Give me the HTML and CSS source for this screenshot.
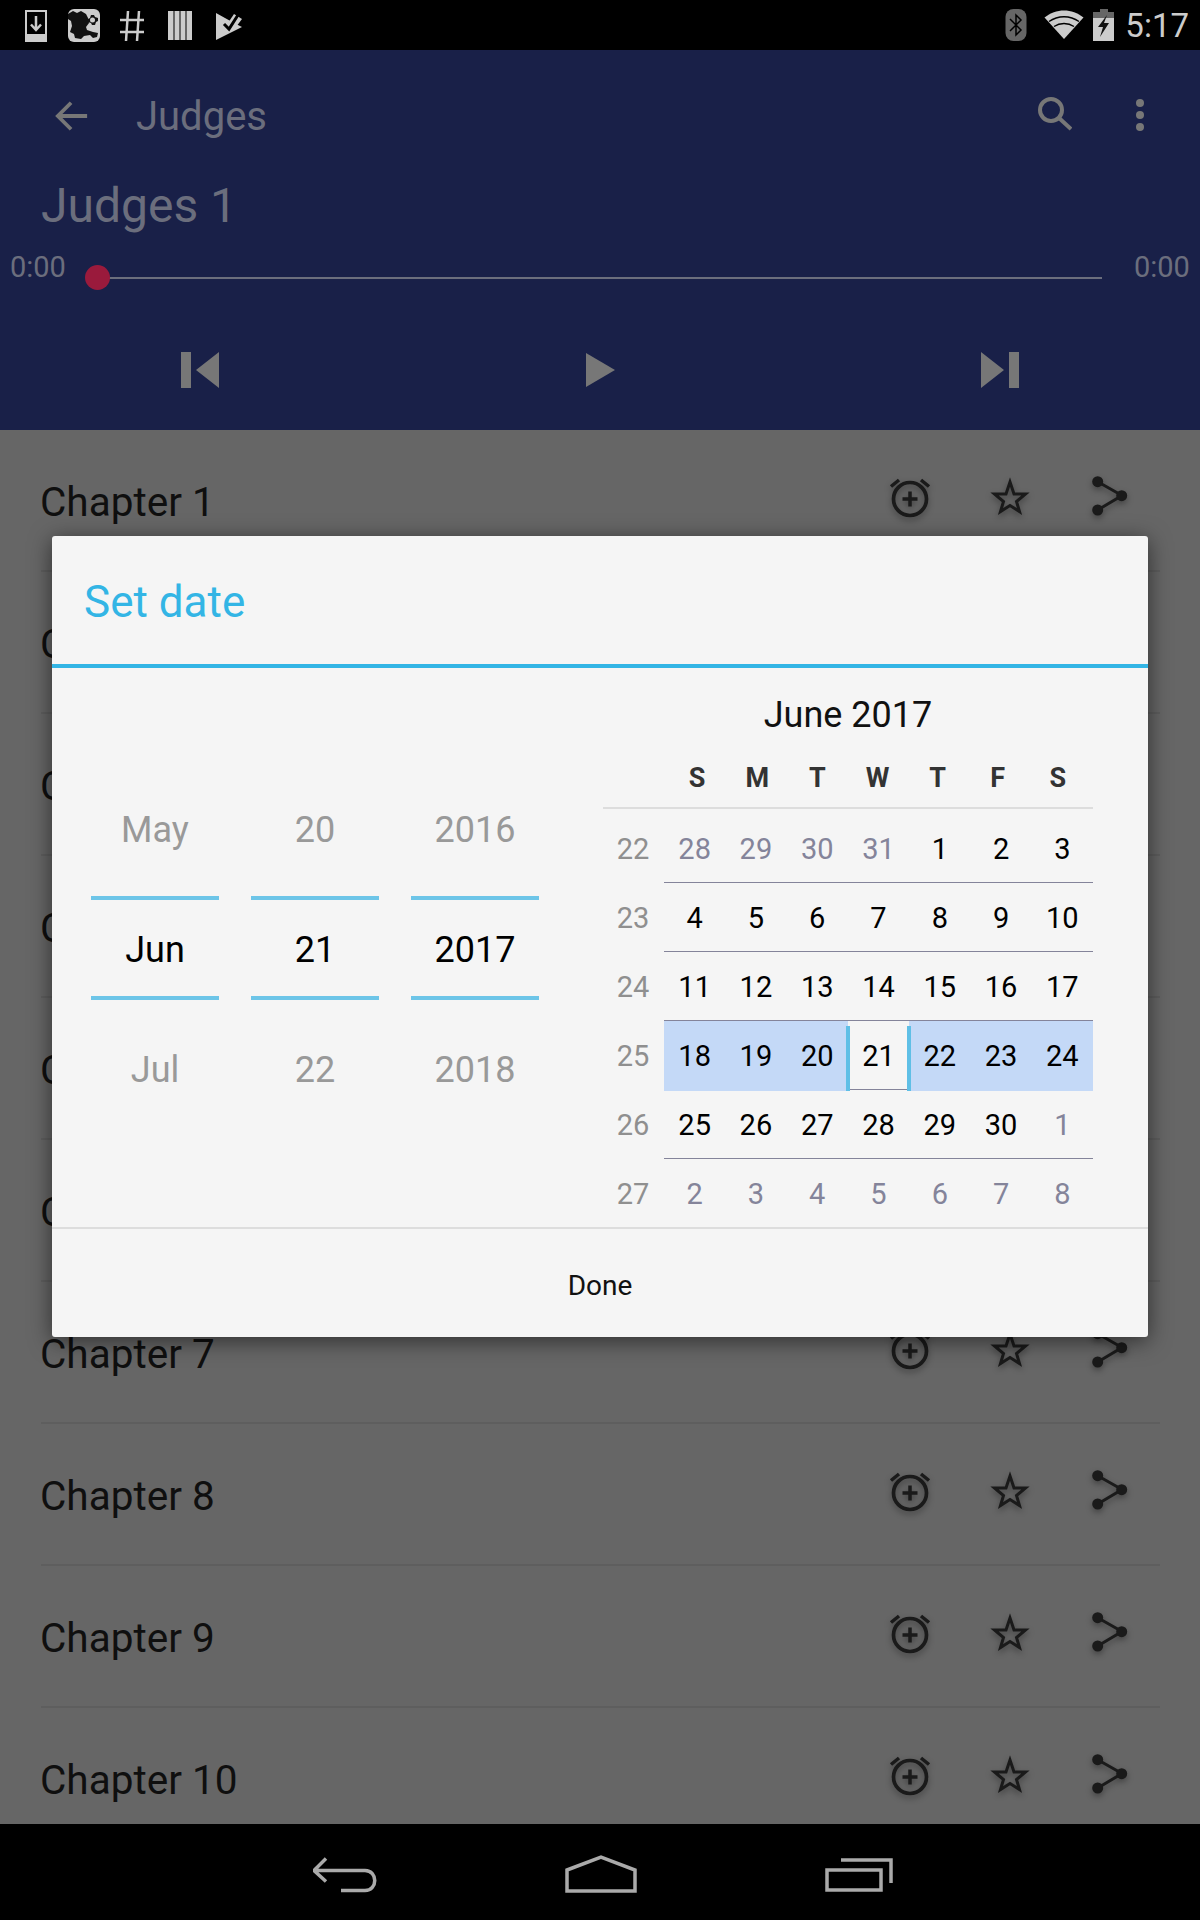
FILE: index.html
```html
<!DOCTYPE html>
<html lang="en">
<head>
    <meta charset="UTF-8">
    <meta name="viewport" content="width=device-width, initial-scale=1.0">
    <title>Judges</title>
    <link rel="stylesheet" href="styles.css">
</head>
<body>
    <svg class="defs" width="0" height="0">
        <symbol id="alarm" viewBox="0 0 48 48">
            <circle cx="24" cy="26" r="16.5" fill="none" stroke="currentColor" stroke-width="3.7"/>
            <path d="M5 13.500 13 7M43 13.500 35 7" fill="none" stroke="currentColor" stroke-width="3.500"/>
            <path d="M24 18.500v15M16.500 26h15" fill="none" stroke="currentColor" stroke-width="3.500"/>
        </symbol>
        <symbol id="star" viewBox="0 0 48 48">
            <path d="M24 9 28 21 39.500 21 30.500 28.500 33.500 38.500 24 32.500 14.500 38.500 17.500 28.500 8.500 21 20 21Z" fill="none" stroke="currentColor" stroke-width="3"/>
        </symbol>
        <symbol id="share" viewBox="0 0 48 48">
            <path d="M11.700 8.700 36 22.500 11.700 37" fill="none" stroke="currentColor" stroke-width="3"/>
            <circle cx="11.700" cy="8.700" r="5.500" fill="currentColor"/>
            <circle cx="35.700" cy="22.700" r="5.500" fill="currentColor"/>
            <circle cx="11.700" cy="37" r="5.500" fill="currentColor"/>
        </symbol>
    </svg>

    <div class="screen">
        <header class="statusbar">
            <div class="status-left">
                <svg class="sicon" viewBox="0 0 48 48">
                    <path d="M14 10h20v30H14Z" fill="none" stroke="#ccc" stroke-width="2"/>
                    <path d="M14 33h20v8H14Z" fill="#ccc"/>
                    <path d="M24 15v13M19 23.500l5 5.500 5-5.500" fill="none" stroke="#ccc" stroke-width="2.500"/>
                </svg>
                <svg class="sicon" viewBox="0 0 48 48">
                    <rect x="8" y="8" width="32" height="33" rx="6" fill="#ccc"/>
                    <path d="M8 13 13 10 17 12 21 10 26 13 28 17 29 22 26 26 27 29 33 31 38 32 37 36 33 37 30 34 24 35 21 38 15 37 14 33 10 31 12 25 11 20 8 18Z" fill="#111"/>
                    <path d="M31 14l3 0 1 2 3 1v3l-2 1-1 3h-3l-1-2-3-1v-3l2-1Z" fill="#111"/>
                    <circle cx="32.500" cy="19" r="2.500" fill="#ccc"/>
                </svg>
                <svg class="sicon" viewBox="0 0 48 48">
                    <path d="M20 10 18 40M31 10 29 40M12 19H36M12 31H36" fill="none" stroke="#ccc" stroke-width="2.500"/>
                </svg>
                <svg class="sicon" viewBox="0 0 48 48">
                    <path d="M12 10h5.500v29H12ZM18.500 10h5v29h-5ZM24.500 10h5v29h-5ZM30.500 10h5.500v29h-5.500Z" fill="#ccc"/>
                </svg>
                <svg class="sicon" viewBox="0 0 48 48">
                    <path d="M12 12 21 17 30 22 38 26 12 39Z" fill="#ccc"/>
                    <path d="M30 13 38 18 32 26 24 22Z" fill="#ccc"/>
                    <path d="M20 23l5 5 9-14" fill="none" stroke="#000" stroke-width="3"/>
                </svg>
            </div>
            <div class="status-right">
                <svg class="sicon" viewBox="0 0 48 48">
                    <rect x="13.500" y="8" width="21" height="32" rx="8" fill="#666"/>
                    <path d="M18 18 29 29 24 34V14L29 19 18 30" fill="none" stroke="#000" stroke-width="1.500"/>
                </svg>
                <svg class="sicon" viewBox="0 0 48 48">
                    <path d="M4.500 16.500C16 7 32 7 43.500 16.500L24 38Z" fill="#ccc"/>
                    <path d="M9 20.500C18 14 30 14 39 20.500M14 25.500C20 21.500 28 21.500 34 25.500" fill="none" stroke="#000" stroke-width="1.500"/>
                </svg>
                <svg class="sicon sicon-batt" viewBox="0 0 32 48">
                    <path d="M12 8h8v3h6v6H5v-6h7Z" fill="#666"/>
                    <path d="M5 17h21v23H5Z" fill="#ccc"/>
                    <path d="M19 14 10 26h5l-3 10 9-14h-5Z" fill="#111"/>
                </svg>
                <span class="clock">5:17</span>
            </div>
        </header>

        <section class="player">
            <div class="toolbar">
                <svg class="tool-back" viewBox="0 0 36 36">
                    <path d="M34 18H4M17 4 3 18 17 32" fill="none" stroke="#777" stroke-width="4"/>
                </svg>
                <span class="toolbar-title">Judges</span>
                <svg class="tool-search" viewBox="0 0 36 36">
                    <circle cx="15" cy="15" r="11" fill="none" stroke="#777" stroke-width="4"/>
                    <path d="M23 23 35 34" fill="none" stroke="#777" stroke-width="4"/>
                </svg>
                <svg class="tool-more" viewBox="0 0 12 36">
                    <circle cx="6" cy="6" r="4" fill="#777"/>
                    <circle cx="6" cy="18" r="4" fill="#777"/>
                    <circle cx="6" cy="30" r="4" fill="#777"/>
                </svg>
            </div>
            <div class="track-title">Judges 1</div>
            <div class="seek">
                <span class="seek-time">0:00</span>
                <div class="seek-bar"><span class="seek-thumb"></span></div>
                <span class="seek-time">0:00</span>
            </div>
            <div class="controls">
                <svg class="ctl" viewBox="0 0 40 38"><path d="M1 1h10v36H1ZM16 19 39 1v36Z" fill="#777"/></svg>
                <svg class="ctl" viewBox="0 0 40 38"><path d="M6 2 35 19 6 36Z" fill="#777"/></svg>
                <svg class="ctl" viewBox="0 0 40 38"><path d="M39 1H29v36h10ZM24 19 1 1v36Z" fill="#777"/></svg>
            </div>
        </section>

        <ul class="chapters">
            <li class="chapter"><span class="chapter-name">Chapter 1</span><svg class="act"><use href="#alarm"/></svg><svg class="act"><use href="#star"/></svg><svg class="act"><use href="#share"/></svg></li>
            <li class="chapter"><span class="chapter-name">Chapter 2</span><svg class="act"><use href="#alarm"/></svg><svg class="act"><use href="#star"/></svg><svg class="act"><use href="#share"/></svg></li>
            <li class="chapter"><span class="chapter-name">Chapter 3</span><svg class="act"><use href="#alarm"/></svg><svg class="act"><use href="#star"/></svg><svg class="act"><use href="#share"/></svg></li>
            <li class="chapter"><span class="chapter-name">Chapter 4</span><svg class="act"><use href="#alarm"/></svg><svg class="act"><use href="#star"/></svg><svg class="act"><use href="#share"/></svg></li>
            <li class="chapter"><span class="chapter-name">Chapter 5</span><svg class="act"><use href="#alarm"/></svg><svg class="act"><use href="#star"/></svg><svg class="act"><use href="#share"/></svg></li>
            <li class="chapter"><span class="chapter-name">Chapter 6</span><svg class="act"><use href="#alarm"/></svg><svg class="act"><use href="#star"/></svg><svg class="act"><use href="#share"/></svg></li>
            <li class="chapter"><span class="chapter-name">Chapter 7</span><svg class="act"><use href="#alarm"/></svg><svg class="act"><use href="#star"/></svg><svg class="act"><use href="#share"/></svg></li>
            <li class="chapter"><span class="chapter-name">Chapter 8</span><svg class="act"><use href="#alarm"/></svg><svg class="act"><use href="#star"/></svg><svg class="act"><use href="#share"/></svg></li>
            <li class="chapter"><span class="chapter-name">Chapter 9</span><svg class="act"><use href="#alarm"/></svg><svg class="act"><use href="#star"/></svg><svg class="act"><use href="#share"/></svg></li>
            <li class="chapter"><span class="chapter-name">Chapter 10</span><svg class="act"><use href="#alarm"/></svg><svg class="act"><use href="#star"/></svg><svg class="act"><use href="#share"/></svg></li>
        </ul>

        <footer class="navbar">
            <svg class="nav-back" viewBox="0 0 66 36">
                <path d="M13 1.500 1 13.500 13 24.500M1 13.500H52C65 13.500 65 33.500 52 33.500H28" fill="none" stroke="#aaa" stroke-width="3.500"/>
            </svg>
            <svg class="nav-home" viewBox="0 0 72 38">
                <path d="M2 15 36 2 70 15V36H2Z" fill="none" stroke="#aaa" stroke-width="3.500"/>
            </svg>
            <svg class="nav-recent" viewBox="0 0 68 34">
                <path d="M2 12H56V32H2Z" fill="none" stroke="#aaa" stroke-width="3.500"/>
                <path d="M16 2H66V25" fill="none" stroke="#aaa" stroke-width="3.500"/>
            </svg>
        </footer>

        <div class="dialog">
            <div class="dialog-title">Set date</div>
            <div class="dialog-body">
                <div class="picker">
                    <div class="picker-col">
                        <div class="picker-item">May</div>
                        <div class="picker-now">Jun</div>
                        <div class="picker-item">Jul</div>
                    </div>
                    <div class="picker-col">
                        <div class="picker-item">20</div>
                        <div class="picker-now">21</div>
                        <div class="picker-item">22</div>
                    </div>
                    <div class="picker-col">
                        <div class="picker-item">2016</div>
                        <div class="picker-now">2017</div>
                        <div class="picker-item">2018</div>
                    </div>
                </div>
                <div class="calendar">
                    <div class="cal-month">June 2017</div>
                    <div class="cal-head">
                        <span>S</span><span>M</span><span>T</span><span>W</span><span>T</span><span>F</span><span>S</span>
                    </div>
                    <div class="cal-week">
                        <span class="week-no">22</span>
                        <div class="days">
                            <span class="off">28</span><span class="off">29</span><span class="off">30</span><span class="off">31</span><span>1</span><span>2</span><span>3</span>
                        </div>
                    </div>
                    <div class="cal-week">
                        <span class="week-no">23</span>
                        <div class="days">
                            <span>4</span><span>5</span><span>6</span><span>7</span><span>8</span><span>9</span><span>10</span>
                        </div>
                    </div>
                    <div class="cal-week">
                        <span class="week-no">24</span>
                        <div class="days">
                            <span>11</span><span>12</span><span>13</span><span>14</span><span>15</span><span>16</span><span>17</span>
                        </div>
                    </div>
                    <div class="cal-week">
                        <span class="week-no">25</span>
                        <div class="days days-picked">
                            <span>18</span><span>19</span><span>20</span><span class="today">21</span><span>22</span><span>23</span><span>24</span>
                        </div>
                    </div>
                    <div class="cal-week">
                        <span class="week-no">26</span>
                        <div class="days">
                            <span>25</span><span>26</span><span>27</span><span>28</span><span>29</span><span>30</span><span class="off">1</span>
                        </div>
                    </div>
                    <div class="cal-week">
                        <span class="week-no">27</span>
                        <div class="days">
                            <span class="off">2</span><span class="off">3</span><span class="off">4</span><span class="off">5</span><span class="off">6</span><span class="off">7</span><span class="off">8</span>
                        </div>
                    </div>
                </div>
            </div>
            <div class="dialog-done">Done</div>
        </div>
    </div>
</body>
</html>
```

FILE: styles.css
```css
* {
    box-sizing: border-box;
}
body {
    margin: 0;
    font-family: Roboto, "Liberation Sans", sans-serif;
    background-color: #000;
}
.defs {
    position: absolute;
}
.screen {
    position: relative;
    width: 1200px;
    height: 1920px;
    overflow: hidden;
    display: flex;
    flex-direction: column;
}

/* status bar */
.statusbar {
    height: 50px;
    flex: none;
    background-color: #000;
    display: flex;
    justify-content: space-between;
    align-items: center;
    padding: 0 11px 0 12px;
}
.status-left,
.status-right {
    display: flex;
    align-items: center;
}
.sicon {
    width: 48px;
    height: 48px;
    display: block;
}
.sicon-batt {
    width: 32px;
}
.clock {
    color: #ccc;
    font-size: 33px;
    margin-left: 5px;
}

/* player */
.player {
    height: 380px;
    flex: none;
    background-color: #192048;
    color: #6b6e7d;
}
.toolbar {
    height: 132px;
    position: relative;
    display: flex;
    align-items: center;
    padding-left: 55px;
}
.tool-back {
    width: 34px;
    height: 34px;
    margin-right: 47px;
}
.toolbar-title {
    font-size: 40px;
    flex: 1;
}
.tool-search {
    width: 36px;
    height: 36px;
    margin: -6px 62px 0 0;
}
.tool-more {
    width: 12px;
    height: 36px;
    margin: -2px 54px 0 0;
}
.track-title {
    font-size: 48px;
    line-height: 56px;
    margin-top: -4px;
    padding-left: 41px;
}
.seek {
    display: flex;
    align-items: center;
    height: 44px;
    margin-top: 22px;
    padding: 0 10px;
}
.seek-time {
    font-size: 29px;
    width: 56px;
    margin-top: -22px;
    flex: none;
}
.seek-bar {
    position: relative;
    flex: 1;
    height: 2px;
    margin: 0 32px 0 29px;
    background-color: #6b6e7d;
}
.seek-thumb {
    position: absolute;
    left: -10px;
    top: -12px;
    width: 25px;
    height: 25px;
    border-radius: 50%;
    background-color: #9a1a3c;
}
.controls {
    display: flex;
    justify-content: space-between;
    padding: 51px 180px 0 180px;
}
.ctl {
    width: 40px;
    height: 38px;
}

/* chapter list */
.chapters {
    flex: 1;
    overflow: hidden;
    margin: 0;
    padding: 0 40px 0 41px;
    list-style: none;
    background-color: #666;
}
.chapter {
    height: 142px;
    display: flex;
    align-items: center;
    border-bottom: 2px solid #5e5e5e;
    color: #1a1a1a;
}
.chapter-name {
    flex: 1;
    font-size: 40.5px;
    margin-left: -1px;
    color: #0f0f0f;
    position: relative;
    top: 2px;
}
.act {
    width: 48px;
    height: 48px;
    margin: 0 26px;
    position: relative;
    top: -3px;
    filter: drop-shadow(0 3px 3px rgba(0, 0, 0, 0.35));
}

/* nav bar */
.navbar {
    height: 96px;
    flex: none;
    background-color: #000;
    position: relative;
    display: flex;
    justify-content: center;
    align-items: flex-start;
}
.nav-back {
    width: 66px;
    height: 36px;
    margin: 33px 0 0 5px;
}
.nav-home {
    width: 72px;
    height: 38px;
    margin: 31px 188px 0 186px;
}
.nav-recent {
    width: 68px;
    height: 34px;
    margin: 34px 0 0 0;
}

/* date dialog */
.dialog {
    position: absolute;
    left: 52px;
    top: 536px;
    width: 1096px;
    height: 801px;
    border-radius: 3px;
    background-color: #f5f5f5;
    box-shadow: 0 4px 22px rgba(0, 0, 0, 0.55);
    display: flex;
    flex-direction: column;
}
.dialog-title {
    height: 132px;
    flex: none;
    padding: 4px 32px 0;
    display: flex;
    align-items: center;
    font-size: 44px;
    color: #33b5e5;
    border-bottom: 4px solid #33b5e5;
}
.dialog-body {
    height: 561px;
    flex: none;
    overflow: hidden;
    display: flex;
    border-bottom: 2px solid #ddd;
}
.picker {
    width: 487px;
    padding: 112px 0 0 39px;
    margin-right: 64px;
    display: flex;
    gap: 32px;
    flex: none;
}
.picker-col {
    width: 128px;
    text-align: center;
    font-size: 36px;
}
.picker-item {
    height: 100px;
    line-height: 100px;
    color: #999;
}
.picker-now {
    height: 104px;
    line-height: 100px;
    margin: 16px 0 20px;
    color: #000;
    border-top: 4px solid #6dc5e8;
    border-bottom: 4px solid #6dc5e8;
}
.calendar {
    width: 490px;
    flex: none;
}
.cal-month {
    height: 92px;
    line-height: 94px;
    text-align: center;
    font-size: 36px;
    color: #111;
}
.cal-head {
    height: 49px;
    padding: 0 5px 12px 64px;
    display: grid;
    grid-template-columns: repeat(7, 1fr);
    align-items: center;
    text-align: center;
    font-size: 27px;
    font-weight: 700;
    color: #333;
    border-bottom: 2px solid #ddd;
    margin-bottom: 5px;
}
.cal-week {
    height: 69px;
    display: flex;
}
.week-no {
    width: 60px;
    margin-right: 1px;
    flex: none;
    line-height: 70px;
    text-align: center;
    font-size: 29px;
    color: #8f8f8f;
}
.days {
    flex: 1;
    display: grid;
    grid-template-columns: repeat(7, 1fr);
    text-align: center;
    font-size: 29px;
    font-weight: 450;
    color: #000;
    border-bottom: 1px solid #84849a;
}
.days span {
    line-height: 70px;
}
.days .off {
    color: #84849a;
}
.days-picked span {
    background-color: #c4d9f7;
}
.days-picked .today {
    position: relative;
    background-color: transparent;
}
.today::before,
.today::after {
    content: "";
    position: absolute;
    top: 5px;
    bottom: 0;
    width: 4px;
    background-color: #5fbfe6;
}
.today::before {
    left: -2px;
}
.today::after {
    right: -2px;
}
.dialog-done {
    flex: 1;
    display: flex;
    align-items: center;
    justify-content: center;
    font-size: 28px;
    color: #111;
    padding-top: 4px;
}
```
